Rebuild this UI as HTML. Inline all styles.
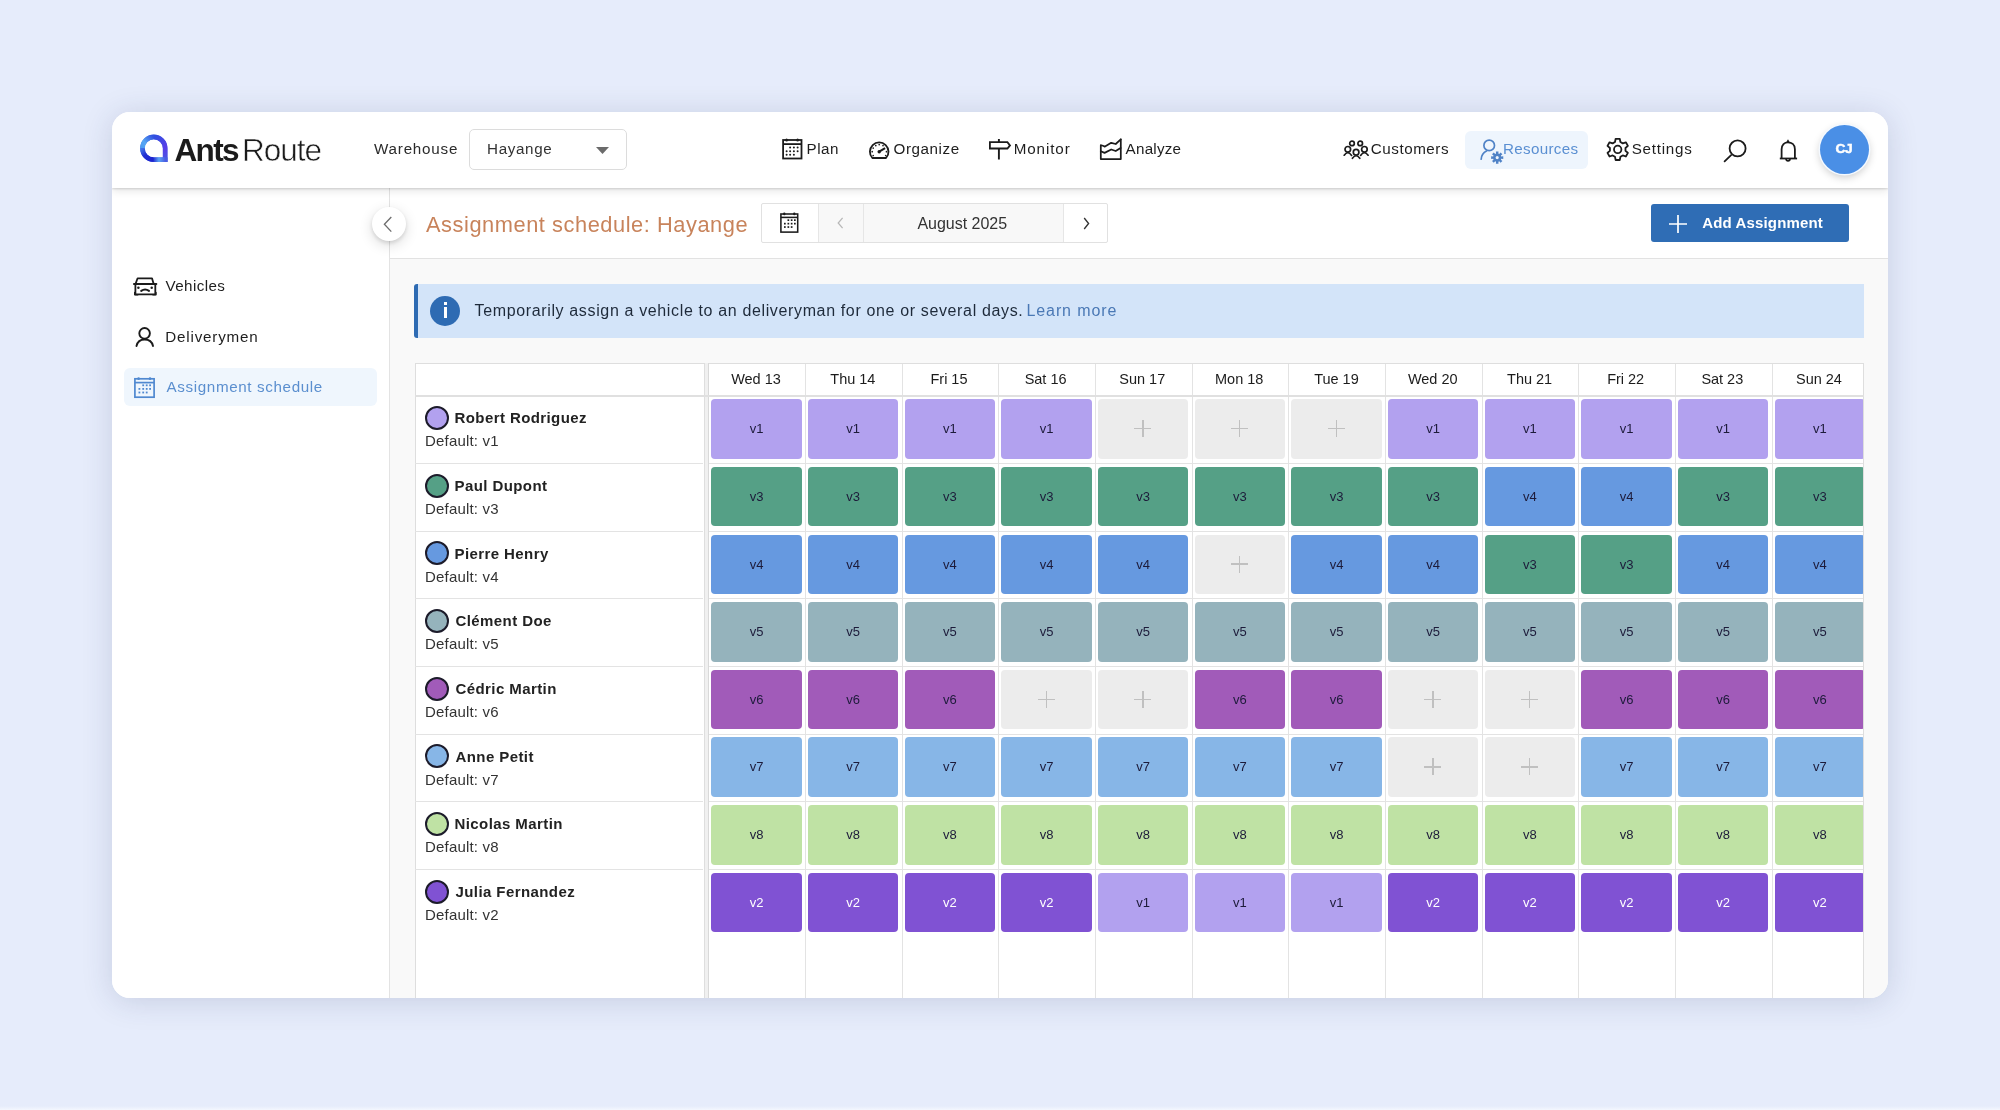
<!DOCTYPE html>
<html><head><meta charset="utf-8">
<style>
*{box-sizing:border-box}
html,body{margin:0;padding:0}
body{width:2000px;height:1110px;background:#e6ecfb;position:relative;overflow:hidden;font-family:"Liberation Sans",sans-serif;color:#222}
.card{position:absolute;left:112px;top:112px;width:1776px;height:886px;background:#fff;border-radius:18px;overflow:hidden;
 box-shadow:0 3px 30px rgba(40,55,100,.17)}
.pg{position:absolute;left:-112px;top:-112px;width:2000px;height:1110px;will-change:transform}
.t{position:absolute;white-space:nowrap;line-height:1;z-index:6}
.header{position:absolute;left:112px;top:112px;width:1776px;height:76px;background:#fff;box-shadow:0 1px 2px rgba(0,0,0,.14),0 3px 8px rgba(0,0,0,.10);z-index:5}
.side{position:absolute;left:112px;top:188px;width:278px;height:810px;background:#fff;border-right:1px solid #e3e3e3}
.sub{position:absolute;left:390px;top:188px;width:1498px;height:71px;background:#fff;border-bottom:1px solid #e2e2e2}
.content{position:absolute;left:390px;top:259px;width:1498px;height:740px;background:#f9f9f9}
.ntab{position:absolute;left:414.5px;top:363px;width:290.5px;height:640px;background:#fff;border:1px solid #dedede;border-bottom:0}
.sep{position:absolute;left:704.3px;top:363px;width:4.6px;height:640px;background:#f0f0f0;border-left:1px solid #d9d9d9;border-right:1px solid #d9d9d9}
.dtab{position:absolute;left:708.8px;top:363.4px;width:1155.2px;height:640px;background:#fff;border-top:1px solid #dedede;border-right:1px solid #dedede;overflow:hidden}
.hl{position:absolute;height:1px;background:#e3e3e3}
.hl2{position:absolute;left:0;width:1200px;height:1px;background:#e3e3e3}
.vl{position:absolute;top:0;width:1px;height:700px;background:#e3e3e3}
.dh{position:absolute;white-space:nowrap;font-size:14.5px;line-height:1;color:#1c1c1c}
.hdrline{position:absolute;left:414.5px;top:395px;width:1449.5px;height:1.6px;background:#e0e0e0;z-index:3}
.dot{position:absolute;width:24px;height:24px;border-radius:50%;border:2.1px solid #1c1b2a}
.nm{position:absolute;font-weight:bold;font-size:15px;line-height:1;white-space:nowrap;color:#222}
.df{position:absolute;font-size:15px;line-height:1;white-space:nowrap;color:#333}
.blk{position:absolute;width:90.4px;height:59.6px;border-radius:4px;text-align:center;line-height:60.4px;font-size:13px;color:#1d1b3a}
.blk.w{color:#fff}
.blk.empty{background:#ececec}
.plus{position:absolute;left:36.5px;top:21px;width:17px;height:17px}
.plus:before{content:"";position:absolute;left:0;top:7.9px;width:17px;height:1.2px;background:#c0c0c0}
.plus:after{content:"";position:absolute;left:7.9px;top:0;width:1.2px;height:17px;background:#c0c0c0}
svg.i{position:absolute;overflow:visible;z-index:6}
.select{position:absolute;left:468.5px;top:129px;width:158.5px;height:41px;border:1px solid #dcdcdc;border-radius:5px;z-index:6;background:#fff}
.resbg{position:absolute;left:1464.5px;top:130.5px;width:123px;height:38.5px;background:#eef5fd;border-radius:6px;z-index:6}
.avatar{position:absolute;left:1820.2px;top:124.8px;width:49px;height:49px;border-radius:50%;background:#4a8fe6;box-shadow:0 0 0 1.5px #f4f9ff,0 3px 9px rgba(0,0,0,.22);z-index:6}
.back{position:absolute;left:371.5px;top:207.3px;width:34px;height:34px;border-radius:50%;background:#fff;box-shadow:0 2px 4px rgba(0,0,0,.12),0 4px 14px rgba(0,0,0,.14);z-index:7}
.dp{position:absolute;left:760.5px;top:203.3px;width:347px;height:40px;border:1px solid #e1e1e1;border-radius:2px;background:#fff}
.dpg{position:absolute;top:0;height:38px;background:#f8f8f8}
.dpl{position:absolute;top:0;height:38px;width:1px;background:#e6e6e6}
.btn{position:absolute;left:1651px;top:204px;width:198px;height:38.3px;background:#2f6db5;border-radius:3px}
.act{position:absolute;left:124.4px;top:368px;width:252.3px;height:37.6px;background:#eff6fd;border-radius:6px}
.banner{position:absolute;left:414px;top:283.8px;width:1449.5px;height:54.4px;background:#d3e4f9;border-left:4px solid #2e6bb3;border-radius:3px 0 0 3px}
.info{position:absolute;left:430px;top:296px;width:30px;height:30px;border-radius:50%;background:#2e6bb3}
.info:before{content:"";position:absolute;left:13.5px;top:6.2px;width:3px;height:3.2px;background:#fff}
.info:after{content:"";position:absolute;left:13.5px;top:11.2px;width:3px;height:11px;background:#fff}
</style></head><body>
<div class="card"><div class="pg">
 <div class="side"></div>
 <div class="sub"></div>
 <div class="content"></div>

 <!-- header -->
 <div class="header"></div>
 <svg class="i" style="left:140px;top:133.5px" width="28" height="28" viewBox="0 0 28 28" fill="none" stroke-width="4.7">
  <defs>
   <linearGradient id="g1" gradientUnits="userSpaceOnUse" x1="2.4" y1="14" x2="13.8" y2="3"><stop offset="0" stop-color="#4c9cf1"/><stop offset=".35" stop-color="#56a6f3"/><stop offset="1" stop-color="#3152e0"/></linearGradient>
   <linearGradient id="g2" gradientUnits="userSpaceOnUse" x1="13.8" y1="3" x2="25.2" y2="14.3"><stop offset="0" stop-color="#3050e0"/><stop offset="1" stop-color="#5a3de8"/></linearGradient>
   <linearGradient id="g3" gradientUnits="userSpaceOnUse" x1="0" y1="14.3" x2="0" y2="25.7"><stop offset="0" stop-color="#5a3de8"/><stop offset="1" stop-color="#4a58e3"/></linearGradient>
   <linearGradient id="g4" gradientUnits="userSpaceOnUse" x1="25.2" y1="0" x2="13.8" y2="0"><stop offset="0" stop-color="#4a5ee3"/><stop offset=".55" stop-color="#5aa4f5"/><stop offset="1" stop-color="#2a3ad6"/></linearGradient>
   <linearGradient id="g5" gradientUnits="userSpaceOnUse" x1="13.8" y1="25.7" x2="2.4" y2="14.3"><stop offset="0" stop-color="#1c22cf"/><stop offset=".6" stop-color="#2230d2"/><stop offset="1" stop-color="#3f72e8"/></linearGradient>
  </defs>
  <path stroke="#3a5ae2" stroke-width="4.4" d="M13.8 2.95A11.35 11.35 0 0 0 2.45 14.3A11.35 11.35 0 0 0 13.8 25.65H25.15V14.3A11.35 11.35 0 0 0 13.8 2.95Z"/>
  <path stroke="url(#g1)" d="M2.45 14.3A11.35 11.35 0 0 1 13.8 2.95"/>
  <path stroke="url(#g2)" d="M13.7 2.95A11.35 11.35 0 0 1 25.15 14.3"/>
  <path stroke="url(#g3)" d="M25.15 14.2V28" stroke-linecap="butt"/>
  <path stroke="url(#g4)" d="M27.5 25.65H13.7"/>
  <path stroke="url(#g5)" d="M13.8 25.65A11.35 11.35 0 0 1 2.45 14.2"/>
 </svg>
 <div class="t" style="left:174.5px;top:134.6px;font-size:31.5px;font-weight:bold;color:#1b1b1b;letter-spacing:-1.67px">Ants</div>
 <div class="t" style="left:242px;top:134.6px;font-size:31.5px;color:#1b1b1b;letter-spacing:-1px;-webkit-text-stroke:0.55px #fff;paint-order:normal">Route</div>

 <div class="select"></div>
 <svg class="i" style="left:595.5px;top:147px" width="13" height="7" viewBox="0 0 13 7"><path d="M0 0H13L6.5 7Z" fill="#6b6b6b"/></svg>

 <!-- Plan calendar -->
 <svg class="i" style="left:781.5px;top:138px" width="21" height="22" viewBox="0 0 21 22" fill="none" stroke="#1b1b1b" stroke-width="1.8">
  <rect x="1.1" y="2" width="18.4" height="18.5"/><path d="M1.1 6.1H19.5"/>
  <g fill="#1b1b1b" stroke="none"><ellipse cx="4.6" cy="1.9" rx="1.4" ry="1.5"/><ellipse cx="15.6" cy="1.9" rx="1.4" ry="1.5"/>
  <circle cx="8.1" cy="9.6" r="1"/><circle cx="11.9" cy="9.6" r="1"/><circle cx="15.6" cy="9.6" r="1"/>
  <circle cx="4.6" cy="13.3" r="1"/><circle cx="8.1" cy="13.3" r="1"/><circle cx="11.9" cy="13.3" r="1"/><circle cx="15.6" cy="13.3" r="1"/>
  <circle cx="4.6" cy="16.8" r="1"/><circle cx="8.1" cy="16.8" r="1"/><circle cx="11.9" cy="16.8" r="1"/></g>
 </svg>
 <!-- Organize gauge -->
 <svg class="i" style="left:867.5px;top:139.5px" width="22" height="20" viewBox="0 0 22 20" fill="none" stroke="#1b1b1b" stroke-width="1.8">
  <path d="M4.36 18A9.3 9.3 0 1 1 18.04 18Z" stroke-linejoin="round"/>
  <path d="M11.2 11.7L17.1 8.2" stroke-width="2"/><circle cx="11.2" cy="11.7" r="1.7" fill="#1b1b1b" stroke="none"/>
  <g fill="#1b1b1b" stroke="none"><circle cx="11.2" cy="4.6" r=".85"/><circle cx="7.8" cy="5.6" r=".85"/><circle cx="15" cy="5.6" r=".85"/><circle cx="5.2" cy="8.1" r=".85"/>
  <circle cx="4.2" cy="11.7" r=".85"/><circle cx="5.2" cy="15.5" r=".85"/><circle cx="18.5" cy="11.7" r=".85"/><circle cx="17.7" cy="15.5" r=".85"/></g>
 </svg>
 <!-- Monitor signpost -->
 <svg class="i" style="left:989px;top:139px" width="22" height="21" viewBox="0 0 22 21" fill="none" stroke="#1b1b1b" stroke-width="1.8">
  <path d="M0.9 3.2H18.4L21 6.4L18.4 9.5H0.9Z" stroke-linejoin="miter"/><path d="M9.9 0V3.2M9.9 9.5V20.5" stroke-width="1.9"/>
 </svg>
 <!-- Analyze chart -->
 <svg class="i" style="left:1100px;top:139px" width="22" height="21" viewBox="0 0 22 21" fill="none" stroke="#1b1b1b" stroke-width="1.75" stroke-linejoin="round" stroke-linecap="round">
  <path d="M0.8 6.4V20.1H20.8V0.4"/><path d="M0.8 6.4Q2.8 6.2 4.6 7.7L11.2 3.8L15.7 5L20.8 0.4"/><path d="M0.8 12.2L4.6 13.9L11.2 10.5L15.7 12L20.6 9"/>
 </svg>
 <!-- Customers -->
 <svg class="i" style="left:1342.5px;top:140px" width="26" height="20" viewBox="0 0 26 20" fill="none" stroke="#1b1b1b" stroke-width="1.7" stroke-linecap="round">
  <circle cx="9" cy="3.4" r="2.3"/><circle cx="17.2" cy="3.4" r="2.3"/>
  <circle cx="4.8" cy="9.3" r="2.8"/><circle cx="21.4" cy="9.3" r="2.8"/><circle cx="13.1" cy="12.2" r="2.8"/>
  <path d="M1.2 15.2Q4.8 10.2 8.6 15.4"/><path d="M17.6 15.4Q21.4 10.2 25.1 15.2"/><path d="M9.4 18.3Q13.1 13.2 16.8 18.3"/>
 </svg>

 <!-- Resources -->
 <div class="resbg"></div>
 <svg class="i" style="left:1479.5px;top:139px" width="25" height="26" viewBox="0 0 25 26" fill="none" stroke="#4f82c6" stroke-width="1.7" stroke-linecap="round">
  <circle cx="9.2" cy="6.4" r="5.3"/><path d="M1.2 20.2C1.5 16.2 3.5 13.5 6.5 12.1"/>
  <path fill="#4f82c6" stroke="none" fill-rule="evenodd" d="M16.04 14.56 L15.91 12.54 L18.49 12.54 L18.36 14.56 L19.24 14.93 L20.58 13.40 L22.40 15.22 L20.87 16.56 L21.24 17.44 L23.26 17.31 L23.26 19.89 L21.24 19.76 L20.87 20.64 L22.40 21.98 L20.58 23.80 L19.24 22.27 L18.36 22.64 L18.49 24.66 L15.91 24.66 L16.04 22.64 L15.16 22.27 L13.82 23.80 L12.00 21.98 L13.53 20.64 L13.16 19.76 L11.14 19.89 L11.14 17.31 L13.16 17.44 L13.53 16.56 L12.00 15.22 L13.82 13.40 L15.16 14.93Z M17.2 17A1.6 1.6 0 1 0 17.2 20.2A1.6 1.6 0 1 0 17.2 17Z"/>
 </svg>
 <!-- Settings gear -->
 <svg class="i" style="left:1606px;top:137px" width="24" height="25" viewBox="0 0 24 25" fill="none" stroke="#1b1b1b" stroke-width="1.8" stroke-linejoin="round">
  <path d="M9.00 4.98 L9.64 1.80 L13.76 1.80 L14.40 4.98 L16.78 6.35 L19.85 5.31 L21.91 8.88 L19.48 11.03 L19.48 13.77 L21.91 15.92 L19.85 19.49 L16.78 18.45 L14.40 19.82 L13.76 23.00 L9.64 23.00 L9.00 19.82 L6.62 18.45 L3.55 19.49 L1.49 15.92 L3.92 13.77 L3.92 11.03 L1.49 8.88 L3.55 5.31 L6.62 6.35Z"/>
  <circle cx="11.7" cy="12.4" r="3.7"/>
 </svg>
 <!-- Search -->
 <svg class="i" style="left:1722.5px;top:138.5px" width="25" height="24" viewBox="0 0 25 24" fill="none" stroke="#1b1b1b" stroke-width="1.8" stroke-linecap="round">
  <circle cx="14.6" cy="9.4" r="8"/><path d="M8.1 16.1L1.6 22.4"/>
 </svg>
 <!-- Bell -->
 <svg class="i" style="left:1778.5px;top:138.5px" width="19" height="24" viewBox="0 0 19 24" fill="none" stroke="#1b1b1b" stroke-width="1.8">
  <path d="M2.6 19.5V10.2C2.6 5.6 5.5 3.3 9 3.3C12.5 3.3 15.9 5.6 15.9 10.2V19.5"/><path d="M0.8 19.5H18.1"/><path d="M7.9 3.4L9 1.4L10.1 3.4Z" fill="#1b1b1b" stroke-width="1.2"/><path d="M7.1 20A1.9 1.9 0 0 0 10.9 20"/>
 </svg>
 <div class="avatar"></div>

 <!-- sub header -->
 <div class="back"></div>
 <svg class="i" style="left:383px;top:216px;z-index:8" width="10" height="17" viewBox="0 0 10 17" fill="none" stroke="#6e6e6e" stroke-width="1.35"><path d="M8.3 1L1.4 8.3L8.3 15.6"/></svg>
 <div class="dp">
  <div class="dpg" style="left:56px;width:245.5px"></div>
  <div class="dpl" style="left:56px"></div><div class="dpl" style="left:101px"></div><div class="dpl" style="left:301.5px"></div>
 </div>
 <svg class="i" style="left:779.5px;top:212px" width="19" height="21" viewBox="0 0 19 21" fill="none" stroke="#1b1b1b" stroke-width="1.55">
  <rect x="0.9" y="2" width="16.8" height="18.1"/><path d="M0.9 5.4H17.7"/>
  <g fill="#1b1b1b" stroke="none"><ellipse cx="4.3" cy="1.9" rx="1.2" ry="1.4"/><ellipse cx="14.3" cy="1.9" rx="1.2" ry="1.4"/><rect x="7.5" y="7.3" width="1.7" height="1.7"/><rect x="10.8" y="7.3" width="1.7" height="1.7"/><rect x="14" y="7.3" width="1.7" height="1.7"/>
  <rect x="4" y="10.8" width="1.7" height="1.7"/><rect x="7.5" y="10.8" width="1.7" height="1.7"/><rect x="10.8" y="10.8" width="1.7" height="1.7"/><rect x="14" y="10.8" width="1.7" height="1.7"/>
  <rect x="4" y="14.2" width="1.7" height="1.7"/><rect x="7.5" y="14.2" width="1.7" height="1.7"/><rect x="10.8" y="14.2" width="1.7" height="1.7"/></g>
 </svg>
 <svg class="i" style="left:836.6px;top:217px" width="7" height="12" viewBox="0 0 7 12" fill="none" stroke="#b8b8b8" stroke-width="1.25"><path d="M5.6 0.8L1.2 6L5.6 11.2"/></svg>
 <svg class="i" style="left:1082.6px;top:216.5px" width="7" height="13" viewBox="0 0 7 13" fill="none" stroke="#333" stroke-width="1.35"><path d="M1.2 1L5.6 6.5L1.2 12"/></svg>
 <div class="btn"></div>
 <svg class="i" style="left:1669.2px;top:214.8px" width="18" height="18" viewBox="0 0 18 18" fill="none" stroke="#fff" stroke-width="1.7"><path d="M9 0V18M0 9H18"/></svg>

 <!-- sidebar -->
 <svg class="i" style="left:132.5px;top:276.5px" width="25" height="19" viewBox="0 0 25 19" fill="none" stroke="#1b1b1b" stroke-width="1.8" stroke-linejoin="round" stroke-linecap="round">
  <path d="M2.5 7L4.6 1.3H19L20.7 7"/><path d="M0.9 7H23.4"/><path d="M2.4 7.3V17.3H22.3V7.3"/>
  <path d="M8.2 13.9Q12.1 11.2 16 13.9" stroke-width="2"/><circle cx="5.4" cy="10.8" r="1.25" fill="#1b1b1b" stroke="none"/><circle cx="18.7" cy="10.8" r="1.25" fill="#1b1b1b" stroke="none"/>
  <path d="M1.8 15.5V17.8H4.8M22.9 15.5V17.8H19.9" stroke-width="1.6"/>
 </svg>
 <svg class="i" style="left:135px;top:326.5px" width="20" height="21" viewBox="0 0 20 21" fill="none" stroke="#1b1b1b" stroke-width="1.9" stroke-linecap="round">
  <circle cx="9.6" cy="6.3" r="5.3"/><path d="M1.5 19C2.5 14.5 5.8 12.5 9.6 12.5C13.4 12.5 17 14.5 18 19"/>
 </svg>
 <div class="act"></div>
 <svg class="i" style="left:134px;top:376.5px" width="21" height="21" viewBox="0 0 21 21" fill="none" stroke="#4f88d0" stroke-width="1.7">
  <rect x="0.9" y="1.8" width="19.2" height="18.4"/><path d="M0.9 5.6H20.1"/>
  <g fill="#4f88d0" stroke="none"><ellipse cx="4.6" cy="1.7" rx="1.3" ry="1.4"/><ellipse cx="16" cy="1.7" rx="1.3" ry="1.4"/><rect x="8.3" y="7.4" width="1.8" height="1.8"/><rect x="11.8" y="7.4" width="1.8" height="1.8"/><rect x="15.2" y="7.4" width="1.8" height="1.8"/>
  <rect x="4.5" y="11" width="1.8" height="1.8"/><rect x="8.3" y="11" width="1.8" height="1.8"/><rect x="11.8" y="11" width="1.8" height="1.8"/><rect x="15.2" y="11" width="1.8" height="1.8"/>
  <rect x="4.5" y="14.6" width="1.8" height="1.8"/><rect x="8.3" y="14.6" width="1.8" height="1.8"/><rect x="11.8" y="14.6" width="1.8" height="1.8"/></g>
 </svg>

 <!-- banner -->
 <div class="banner"></div>
 <div class="info"></div>

<div class="t" style="left:374.00px;top:141.37px;font-size:15.2px;font-weight:400;color:#2b2b2b;letter-spacing:0.787px;">Warehouse</div>
<div class="t" style="left:487.00px;top:141.37px;font-size:15.2px;font-weight:400;color:#333;letter-spacing:0.667px;">Hayange</div>
<div class="t" style="left:806.50px;top:140.87px;font-size:15.2px;font-weight:400;color:#1e1e1e;letter-spacing:0.500px;">Plan</div>
<div class="t" style="left:893.50px;top:140.87px;font-size:15.2px;font-weight:400;color:#1e1e1e;letter-spacing:0.571px;">Organize</div>
<div class="t" style="left:1013.70px;top:140.87px;font-size:15.2px;font-weight:400;color:#1e1e1e;letter-spacing:0.900px;">Monitor</div>
<div class="t" style="left:1125.60px;top:140.87px;font-size:15.2px;font-weight:400;color:#1e1e1e;letter-spacing:0.233px;">Analyze</div>
<div class="t" style="left:1370.80px;top:140.87px;font-size:15.2px;font-weight:400;color:#1e1e1e;letter-spacing:0.537px;">Customers</div>
<div class="t" style="left:1503.00px;top:140.87px;font-size:15.2px;font-weight:400;color:#5a8fd2;letter-spacing:0.312px;">Resources</div>
<div class="t" style="left:1631.70px;top:140.87px;font-size:15.2px;font-weight:400;color:#1e1e1e;letter-spacing:0.757px;">Settings</div>
<div class="t" style="left:1835.60px;top:142.31px;font-size:13.7px;font-weight:700;color:#fff;letter-spacing:-0.600px;-webkit-text-stroke:0.5px #fff">CJ</div>
<div class="t" style="left:426.00px;top:213.51px;font-size:21.8px;font-weight:400;color:#c8835b;letter-spacing:0.556px;">Assignment schedule: Hayange</div>
<div class="t" style="left:917.40px;top:215.54px;font-size:16px;font-weight:400;color:#333;letter-spacing:-0.020px;">August 2025</div>
<div class="t" style="left:1702.20px;top:215.20px;font-size:15px;font-weight:700;color:#fff;letter-spacing:0.154px;">Add Assignment</div>
<div class="t" style="left:165.50px;top:277.77px;font-size:15.2px;font-weight:400;color:#1e1e1e;letter-spacing:0.400px;">Vehicles</div>
<div class="t" style="left:165.20px;top:328.67px;font-size:15.2px;font-weight:400;color:#1e1e1e;letter-spacing:0.820px;">Deliverymen</div>
<div class="t" style="left:166.60px;top:379.07px;font-size:15.2px;font-weight:400;color:#5b8fcf;letter-spacing:0.628px;">Assignment schedule</div>
<div class="t" style="left:474.50px;top:303.44px;font-size:16px;font-weight:400;color:#1e2a3a;letter-spacing:0.641px;">Temporarily assign a vehicle to an deliveryman for one or several days.</div>
<div class="t" style="left:1026.50px;top:303.44px;font-size:16px;font-weight:400;color:#4a78b5;letter-spacing:0.900px;">Learn more</div>

 <!-- table -->
 <div class="hdrline"></div>
 <div class="sep"></div>
<div class="ntab"></div>
<div class="dot" style="left:425px;top:406.00px;background:#b2a1ef"></div>
<div class="nm" style="left:454.50px;top:410.30px;letter-spacing:0.413px">Robert Rodriguez</div>
<div class="df" style="left:425.00px;top:433.40px;letter-spacing:0.180px">Default: v1</div>
<div class="hl" style="left:415px;top:462.96px;width:288px"></div>
<div class="dot" style="left:425px;top:473.66px;background:#55a086"></div>
<div class="nm" style="left:454.50px;top:477.96px;letter-spacing:0.413px">Paul Dupont</div>
<div class="df" style="left:425.00px;top:501.06px;letter-spacing:0.180px">Default: v3</div>
<div class="hl" style="left:415px;top:530.62px;width:288px"></div>
<div class="dot" style="left:425px;top:541.32px;background:#6699e0"></div>
<div class="nm" style="left:454.50px;top:545.62px;letter-spacing:0.413px">Pierre Henry</div>
<div class="df" style="left:425.00px;top:568.72px;letter-spacing:0.180px">Default: v4</div>
<div class="hl" style="left:415px;top:598.28px;width:288px"></div>
<div class="dot" style="left:425px;top:608.98px;background:#95b3bc"></div>
<div class="nm" style="left:455.50px;top:613.28px;letter-spacing:0.413px">Clément Doe</div>
<div class="df" style="left:425.00px;top:636.38px;letter-spacing:0.180px">Default: v5</div>
<div class="hl" style="left:415px;top:665.94px;width:288px"></div>
<div class="dot" style="left:425px;top:676.64px;background:#a15bb9"></div>
<div class="nm" style="left:455.50px;top:680.94px;letter-spacing:0.413px">Cédric Martin</div>
<div class="df" style="left:425.00px;top:704.04px;letter-spacing:0.180px">Default: v6</div>
<div class="hl" style="left:415px;top:733.60px;width:288px"></div>
<div class="dot" style="left:425px;top:744.30px;background:#87b6e7"></div>
<div class="nm" style="left:455.50px;top:748.60px;letter-spacing:0.413px">Anne Petit</div>
<div class="df" style="left:425.00px;top:771.70px;letter-spacing:0.180px">Default: v7</div>
<div class="hl" style="left:415px;top:801.26px;width:288px"></div>
<div class="dot" style="left:425px;top:811.96px;background:#bfe2a4"></div>
<div class="nm" style="left:454.50px;top:816.26px;letter-spacing:0.413px">Nicolas Martin</div>
<div class="df" style="left:425.00px;top:839.36px;letter-spacing:0.180px">Default: v8</div>
<div class="hl" style="left:415px;top:868.92px;width:288px"></div>
<div class="dot" style="left:425px;top:879.62px;background:#8052d3"></div>
<div class="nm" style="left:455.50px;top:883.92px;letter-spacing:0.413px">Julia Fernandez</div>
<div class="df" style="left:425.00px;top:907.02px;letter-spacing:0.180px">Default: v2</div>
<div class="dtab">
<div class="dh" style="left:22.39px;top:7.48px;letter-spacing:-0.020px">Wed 13</div>
<div class="vl" style="left:96.17px"></div>
<div class="dh" style="left:121.55px;top:7.48px;letter-spacing:-0.020px">Thu 14</div>
<div class="vl" style="left:192.84px"></div>
<div class="dh" style="left:221.73px;top:7.48px;letter-spacing:-0.020px">Fri 15</div>
<div class="vl" style="left:289.51px"></div>
<div class="dh" style="left:315.89px;top:7.48px;letter-spacing:-0.020px">Sat 16</div>
<div class="vl" style="left:386.18px"></div>
<div class="dh" style="left:410.56px;top:7.48px;letter-spacing:-0.020px">Sun 17</div>
<div class="vl" style="left:482.85px"></div>
<div class="dh" style="left:506.24px;top:7.48px;letter-spacing:-0.020px">Mon 18</div>
<div class="vl" style="left:579.52px"></div>
<div class="dh" style="left:605.40px;top:7.48px;letter-spacing:-0.020px">Tue 19</div>
<div class="vl" style="left:676.19px"></div>
<div class="dh" style="left:699.08px;top:7.48px;letter-spacing:-0.020px">Wed 20</div>
<div class="vl" style="left:772.86px"></div>
<div class="dh" style="left:798.25px;top:7.48px;letter-spacing:-0.020px">Thu 21</div>
<div class="vl" style="left:869.53px"></div>
<div class="dh" style="left:898.41px;top:7.48px;letter-spacing:-0.020px">Fri 22</div>
<div class="vl" style="left:966.20px"></div>
<div class="dh" style="left:992.59px;top:7.48px;letter-spacing:-0.020px">Sat 23</div>
<div class="vl" style="left:1062.87px"></div>
<div class="dh" style="left:1087.26px;top:7.48px;letter-spacing:-0.020px">Sun 24</div>
<div class="blk" style="left:2.50px;top:34.80px;background:#b2a1ef">v1</div>
<div class="blk" style="left:99.17px;top:34.80px;background:#b2a1ef">v1</div>
<div class="blk" style="left:195.84px;top:34.80px;background:#b2a1ef">v1</div>
<div class="blk" style="left:292.51px;top:34.80px;background:#b2a1ef">v1</div>
<div class="blk empty" style="left:389.18px;top:34.80px"><span class="plus"></span></div>
<div class="blk empty" style="left:485.85px;top:34.80px"><span class="plus"></span></div>
<div class="blk empty" style="left:582.52px;top:34.80px"><span class="plus"></span></div>
<div class="blk" style="left:679.19px;top:34.80px;background:#b2a1ef">v1</div>
<div class="blk" style="left:775.86px;top:34.80px;background:#b2a1ef">v1</div>
<div class="blk" style="left:872.53px;top:34.80px;background:#b2a1ef">v1</div>
<div class="blk" style="left:969.20px;top:34.80px;background:#b2a1ef">v1</div>
<div class="blk" style="left:1065.87px;top:34.80px;background:#b2a1ef">v1</div>
<div class="hl2" style="top:98.56px"></div>
<div class="blk" style="left:2.50px;top:102.46px;background:#55a086">v3</div>
<div class="blk" style="left:99.17px;top:102.46px;background:#55a086">v3</div>
<div class="blk" style="left:195.84px;top:102.46px;background:#55a086">v3</div>
<div class="blk" style="left:292.51px;top:102.46px;background:#55a086">v3</div>
<div class="blk" style="left:389.18px;top:102.46px;background:#55a086">v3</div>
<div class="blk" style="left:485.85px;top:102.46px;background:#55a086">v3</div>
<div class="blk" style="left:582.52px;top:102.46px;background:#55a086">v3</div>
<div class="blk" style="left:679.19px;top:102.46px;background:#55a086">v3</div>
<div class="blk" style="left:775.86px;top:102.46px;background:#6699e0">v4</div>
<div class="blk" style="left:872.53px;top:102.46px;background:#6699e0">v4</div>
<div class="blk" style="left:969.20px;top:102.46px;background:#55a086">v3</div>
<div class="blk" style="left:1065.87px;top:102.46px;background:#55a086">v3</div>
<div class="hl2" style="top:166.22px"></div>
<div class="blk" style="left:2.50px;top:170.12px;background:#6699e0">v4</div>
<div class="blk" style="left:99.17px;top:170.12px;background:#6699e0">v4</div>
<div class="blk" style="left:195.84px;top:170.12px;background:#6699e0">v4</div>
<div class="blk" style="left:292.51px;top:170.12px;background:#6699e0">v4</div>
<div class="blk" style="left:389.18px;top:170.12px;background:#6699e0">v4</div>
<div class="blk empty" style="left:485.85px;top:170.12px"><span class="plus"></span></div>
<div class="blk" style="left:582.52px;top:170.12px;background:#6699e0">v4</div>
<div class="blk" style="left:679.19px;top:170.12px;background:#6699e0">v4</div>
<div class="blk" style="left:775.86px;top:170.12px;background:#55a086">v3</div>
<div class="blk" style="left:872.53px;top:170.12px;background:#55a086">v3</div>
<div class="blk" style="left:969.20px;top:170.12px;background:#6699e0">v4</div>
<div class="blk" style="left:1065.87px;top:170.12px;background:#6699e0">v4</div>
<div class="hl2" style="top:233.88px"></div>
<div class="blk" style="left:2.50px;top:237.78px;background:#95b3bc">v5</div>
<div class="blk" style="left:99.17px;top:237.78px;background:#95b3bc">v5</div>
<div class="blk" style="left:195.84px;top:237.78px;background:#95b3bc">v5</div>
<div class="blk" style="left:292.51px;top:237.78px;background:#95b3bc">v5</div>
<div class="blk" style="left:389.18px;top:237.78px;background:#95b3bc">v5</div>
<div class="blk" style="left:485.85px;top:237.78px;background:#95b3bc">v5</div>
<div class="blk" style="left:582.52px;top:237.78px;background:#95b3bc">v5</div>
<div class="blk" style="left:679.19px;top:237.78px;background:#95b3bc">v5</div>
<div class="blk" style="left:775.86px;top:237.78px;background:#95b3bc">v5</div>
<div class="blk" style="left:872.53px;top:237.78px;background:#95b3bc">v5</div>
<div class="blk" style="left:969.20px;top:237.78px;background:#95b3bc">v5</div>
<div class="blk" style="left:1065.87px;top:237.78px;background:#95b3bc">v5</div>
<div class="hl2" style="top:301.54px"></div>
<div class="blk" style="left:2.50px;top:305.44px;background:#a15bb9">v6</div>
<div class="blk" style="left:99.17px;top:305.44px;background:#a15bb9">v6</div>
<div class="blk" style="left:195.84px;top:305.44px;background:#a15bb9">v6</div>
<div class="blk empty" style="left:292.51px;top:305.44px"><span class="plus"></span></div>
<div class="blk empty" style="left:389.18px;top:305.44px"><span class="plus"></span></div>
<div class="blk" style="left:485.85px;top:305.44px;background:#a15bb9">v6</div>
<div class="blk" style="left:582.52px;top:305.44px;background:#a15bb9">v6</div>
<div class="blk empty" style="left:679.19px;top:305.44px"><span class="plus"></span></div>
<div class="blk empty" style="left:775.86px;top:305.44px"><span class="plus"></span></div>
<div class="blk" style="left:872.53px;top:305.44px;background:#a15bb9">v6</div>
<div class="blk" style="left:969.20px;top:305.44px;background:#a15bb9">v6</div>
<div class="blk" style="left:1065.87px;top:305.44px;background:#a15bb9">v6</div>
<div class="hl2" style="top:369.20px"></div>
<div class="blk" style="left:2.50px;top:373.10px;background:#87b6e7">v7</div>
<div class="blk" style="left:99.17px;top:373.10px;background:#87b6e7">v7</div>
<div class="blk" style="left:195.84px;top:373.10px;background:#87b6e7">v7</div>
<div class="blk" style="left:292.51px;top:373.10px;background:#87b6e7">v7</div>
<div class="blk" style="left:389.18px;top:373.10px;background:#87b6e7">v7</div>
<div class="blk" style="left:485.85px;top:373.10px;background:#87b6e7">v7</div>
<div class="blk" style="left:582.52px;top:373.10px;background:#87b6e7">v7</div>
<div class="blk empty" style="left:679.19px;top:373.10px"><span class="plus"></span></div>
<div class="blk empty" style="left:775.86px;top:373.10px"><span class="plus"></span></div>
<div class="blk" style="left:872.53px;top:373.10px;background:#87b6e7">v7</div>
<div class="blk" style="left:969.20px;top:373.10px;background:#87b6e7">v7</div>
<div class="blk" style="left:1065.87px;top:373.10px;background:#87b6e7">v7</div>
<div class="hl2" style="top:436.86px"></div>
<div class="blk" style="left:2.50px;top:440.76px;background:#bfe2a4">v8</div>
<div class="blk" style="left:99.17px;top:440.76px;background:#bfe2a4">v8</div>
<div class="blk" style="left:195.84px;top:440.76px;background:#bfe2a4">v8</div>
<div class="blk" style="left:292.51px;top:440.76px;background:#bfe2a4">v8</div>
<div class="blk" style="left:389.18px;top:440.76px;background:#bfe2a4">v8</div>
<div class="blk" style="left:485.85px;top:440.76px;background:#bfe2a4">v8</div>
<div class="blk" style="left:582.52px;top:440.76px;background:#bfe2a4">v8</div>
<div class="blk" style="left:679.19px;top:440.76px;background:#bfe2a4">v8</div>
<div class="blk" style="left:775.86px;top:440.76px;background:#bfe2a4">v8</div>
<div class="blk" style="left:872.53px;top:440.76px;background:#bfe2a4">v8</div>
<div class="blk" style="left:969.20px;top:440.76px;background:#bfe2a4">v8</div>
<div class="blk" style="left:1065.87px;top:440.76px;background:#bfe2a4">v8</div>
<div class="hl2" style="top:504.52px"></div>
<div class="blk w" style="left:2.50px;top:508.42px;background:#8052d3">v2</div>
<div class="blk w" style="left:99.17px;top:508.42px;background:#8052d3">v2</div>
<div class="blk w" style="left:195.84px;top:508.42px;background:#8052d3">v2</div>
<div class="blk w" style="left:292.51px;top:508.42px;background:#8052d3">v2</div>
<div class="blk" style="left:389.18px;top:508.42px;background:#b2a1ef">v1</div>
<div class="blk" style="left:485.85px;top:508.42px;background:#b2a1ef">v1</div>
<div class="blk" style="left:582.52px;top:508.42px;background:#b2a1ef">v1</div>
<div class="blk w" style="left:679.19px;top:508.42px;background:#8052d3">v2</div>
<div class="blk w" style="left:775.86px;top:508.42px;background:#8052d3">v2</div>
<div class="blk w" style="left:872.53px;top:508.42px;background:#8052d3">v2</div>
<div class="blk w" style="left:969.20px;top:508.42px;background:#8052d3">v2</div>
<div class="blk w" style="left:1065.87px;top:508.42px;background:#8052d3">v2</div>
</div>
</div></div>
<div style="position:absolute;left:0;top:1106px;width:2000px;height:4px;background:linear-gradient(#e6ecfb,#f4f7fe)"></div>
</body></html>
